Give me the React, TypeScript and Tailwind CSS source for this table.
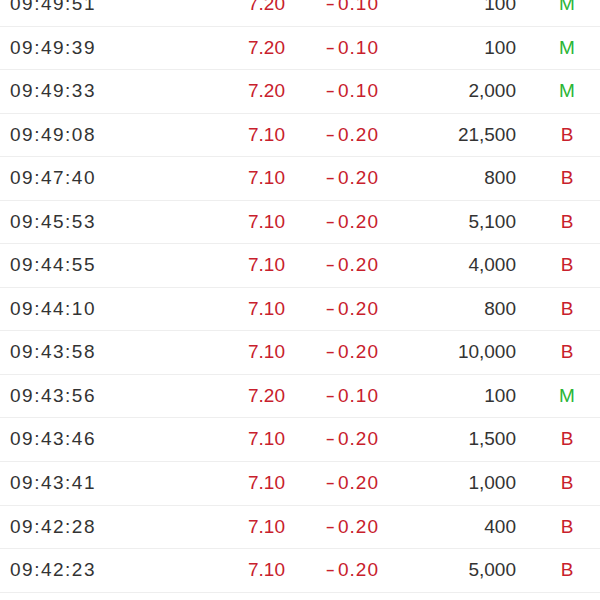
import React from "react";

const trades = [
  { time: "09:49:51", price: "7.20", change: "0.10", vol: "100", side: "M" },
  { time: "09:49:39", price: "7.20", change: "0.10", vol: "100", side: "M" },
  { time: "09:49:33", price: "7.20", change: "0.10", vol: "2,000", side: "M" },
  { time: "09:49:08", price: "7.10", change: "0.20", vol: "21,500", side: "B" },
  { time: "09:47:40", price: "7.10", change: "0.20", vol: "800", side: "B" },
  { time: "09:45:53", price: "7.10", change: "0.20", vol: "5,100", side: "B" },
  { time: "09:44:55", price: "7.10", change: "0.20", vol: "4,000", side: "B" },
  { time: "09:44:10", price: "7.10", change: "0.20", vol: "800", side: "B" },
  { time: "09:43:58", price: "7.10", change: "0.20", vol: "10,000", side: "B" },
  { time: "09:43:56", price: "7.20", change: "0.10", vol: "100", side: "M" },
  { time: "09:43:46", price: "7.10", change: "0.20", vol: "1,500", side: "B" },
  { time: "09:43:41", price: "7.10", change: "0.20", vol: "1,000", side: "B" },
  { time: "09:42:28", price: "7.10", change: "0.20", vol: "400", side: "B" },
  { time: "09:42:23", price: "7.10", change: "0.20", vol: "5,000", side: "B" },
];

export default function App() {
  return (
    <div className="w-[600px] h-[600px] overflow-hidden bg-white font-['Liberation_Sans',Arial,sans-serif] text-[19px] text-[#333333]">
      {/* list is scrolled: first row is partly hidden */}
      <div className="-mt-[17px]">
        {trades.map((t, i) => (
          <div key={i} className="flex items-center h-[43.55px] border-b border-[#eeeeee]">
            <div className="w-[200px] pl-[10px] tracking-[1.5px]">{t.time}</div>
            <div className="w-[85px] text-right text-[#c8202c]">{t.price}</div>
            <div className="w-[94px] text-right text-[#c8202c] tracking-[1px]">
              <span className="inline-block scale-x-150 pr-[3px]">-</span>
              {t.change}
            </div>
            <div className="w-[137px] text-right">{t.vol}</div>
            <div
              className={
                t.side === "M"
                  ? "w-[30px] ml-[36px] text-center text-[#2ab534]"
                  : "w-[30px] ml-[36px] text-center text-[#c8202c]"
              }
            >
              {t.side}
            </div>
          </div>
        ))}
      </div>
    </div>
  );
}
